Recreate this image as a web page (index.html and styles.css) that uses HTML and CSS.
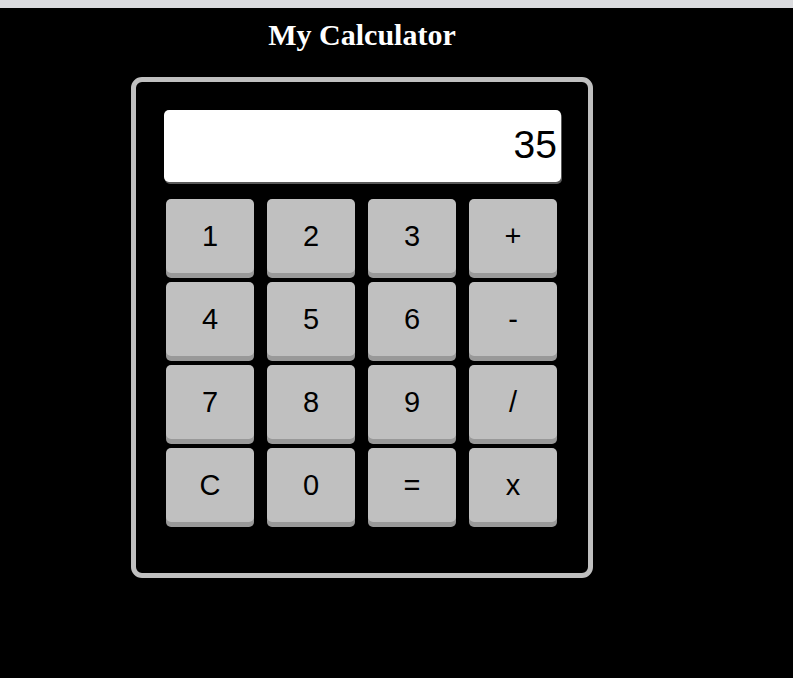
FILE: index.html
```html
<!DOCTYPE html>
<html>
<head>
<meta charset="utf-8">
<link rel="stylesheet" href="styles.css">
</head>
<body>
<div class="topbar"></div>
<div class="page">
  <h1 class="title">My Calculator</h1>
  <div class="calc">
    <div class="display">35</div>
    <div class="keys">
      <button class="key">1</button>
      <button class="key">2</button>
      <button class="key">3</button>
      <button class="key">+</button>
      <button class="key">4</button>
      <button class="key">5</button>
      <button class="key">6</button>
      <button class="key">-</button>
      <button class="key">7</button>
      <button class="key">8</button>
      <button class="key">9</button>
      <button class="key">/</button>
      <button class="key">C</button>
      <button class="key">0</button>
      <button class="key">=</button>
      <button class="key">x</button>
    </div>
  </div>
</div>
</body>
</html>
```
FILE: styles.css
```css
html, body {
  margin: 0;
  padding: 0;
  background: #000;
  height: 100%;
}
.topbar {
  height: 8px;
  background: #dadbde;
}
.page {
  width: 724px;
  padding-top: 10px;
}
.title {
  margin: 0;
  text-align: center;
  color: #fff;
  font-family: "Liberation Serif", "Times New Roman", serif;
  font-weight: bold;
  font-size: 30px;
  line-height: 34px;
}
.calc {
  width: 462px;
  height: 501px;
  box-sizing: border-box;
  margin: 25px auto 0;
  border: 5px solid #c0c0c0;
  border-radius: 11px;
  padding: 28px 27px 0 28px;
}
.display {
  width: 397px;
  height: 72px;
  box-sizing: border-box;
  background: #fff;
  border-radius: 5px;
  box-shadow: 1px 2px 0 #5a5a5a;
  padding-right: 4px;
  text-align: right;
  font-family: "Liberation Sans", Arial, sans-serif;
  font-size: 39px;
  line-height: 70px;
  color: #000;
}
.keys {
  display: grid;
  grid-template-columns: repeat(4, 88px);
  grid-auto-rows: 74px;
  column-gap: 13px;
  row-gap: 9px;
  margin: 17px 0 0 2px;
}
.key {
  border: none;
  margin: 0;
  padding: 0;
  background: #c0c0c0;
  border-radius: 5px;
  box-shadow: 0 5px 0 #999999;
  font-family: "Liberation Sans", Arial, sans-serif;
  font-size: 29px;
  color: #000;
  cursor: pointer;
}
```
